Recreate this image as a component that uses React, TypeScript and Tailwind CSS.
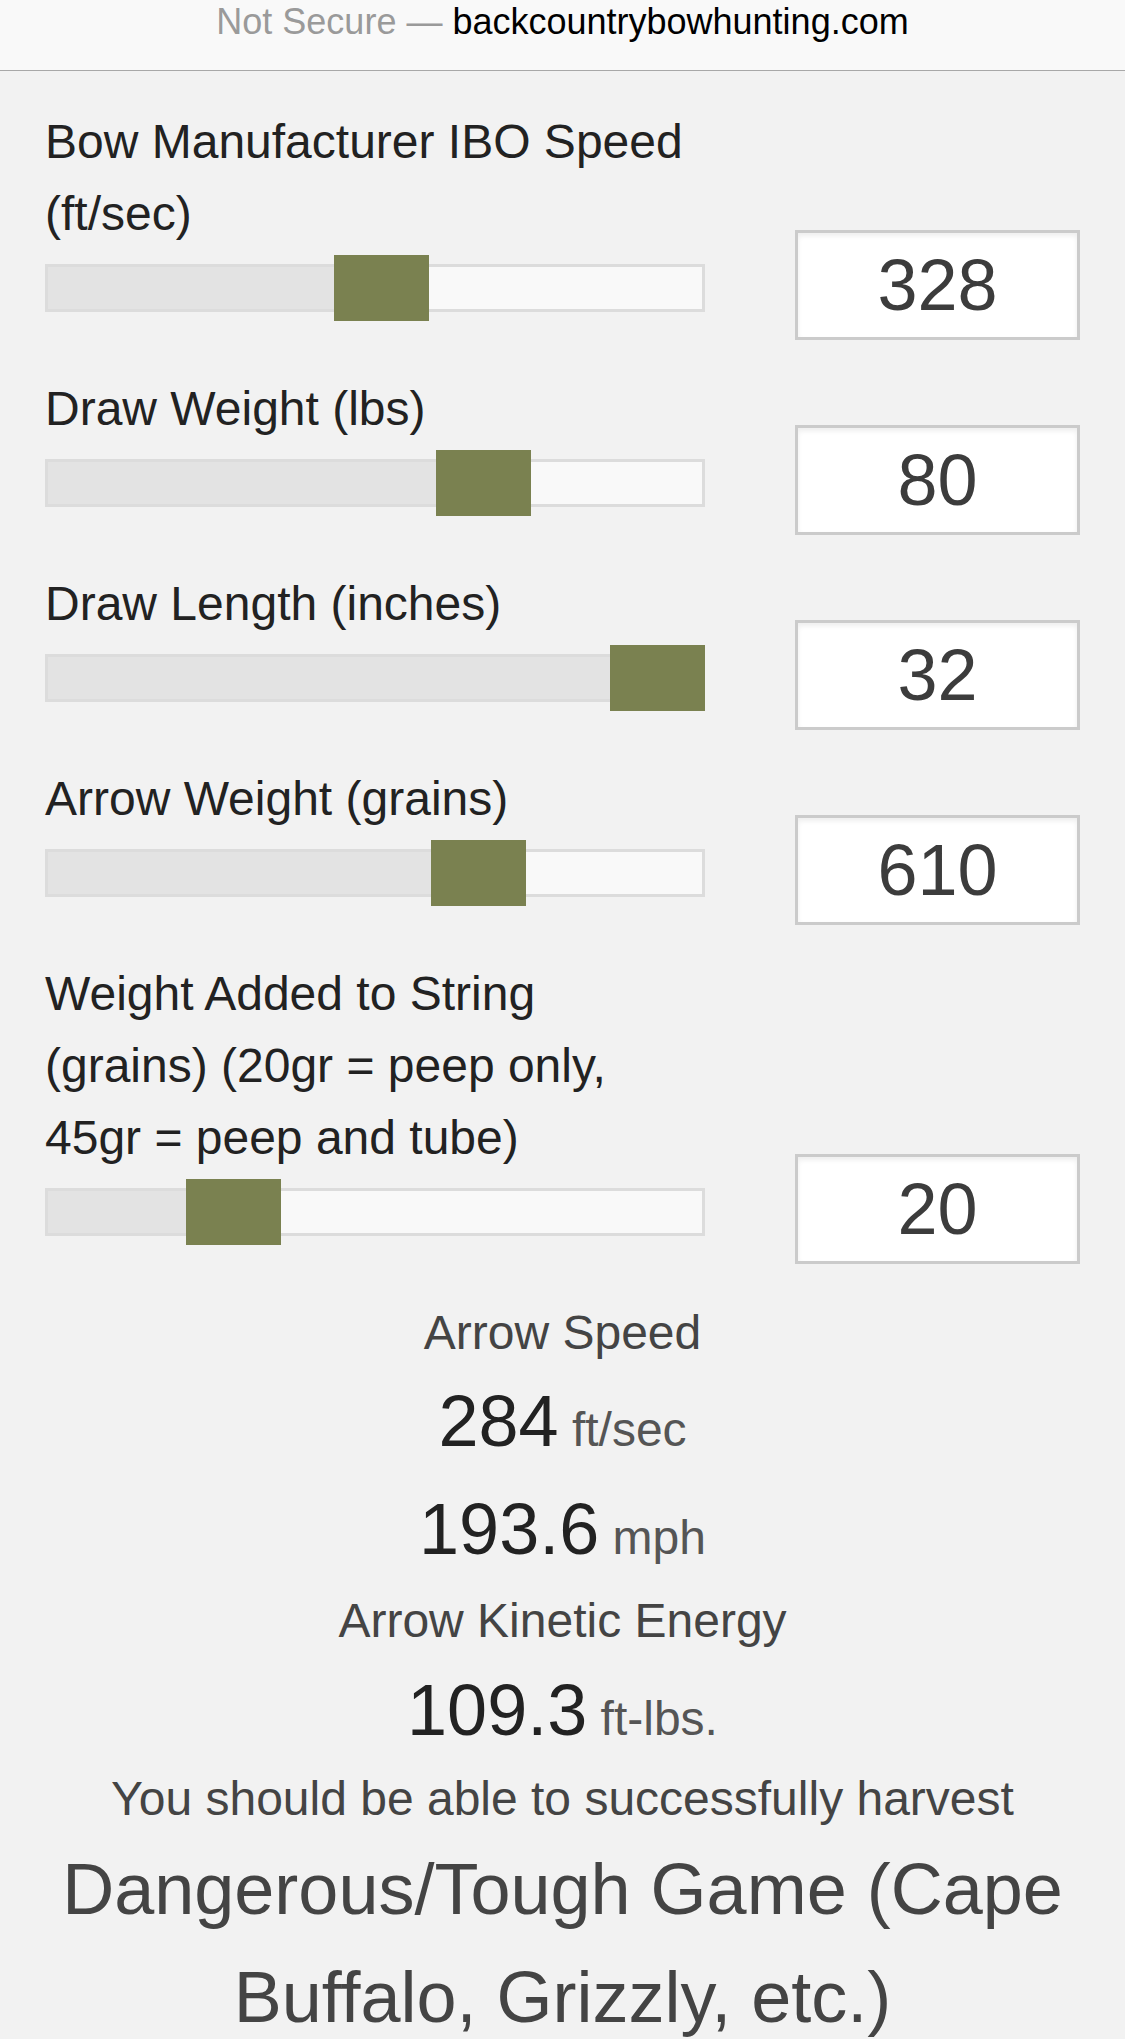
import React from "react";

type Field = {
  label: string;
  value: string;
  offset: number; // thumb offset from the track's left edge, px
};

const fields: Field[] = [
  { label: "Bow Manufacturer IBO Speed (ft/sec)", value: "328", offset: 289 },
  { label: "Draw Weight (lbs)", value: "80", offset: 391 },
  { label: "Draw Length (inches)", value: "32", offset: 565 },
  { label: "Arrow Weight (grains)", value: "610", offset: 386 },
  {
    label: "Weight Added to String (grains) (20gr = peep only, 45gr = peep and tube)",
    value: "20",
    offset: 141,
  },
];

const Slider = ({ offset }: { offset: number }) => {
  return (
    <div className="relative mt-[5px] h-[66px] w-[660px]">
      <div className="absolute left-0 right-0 top-[9px] h-[48px] border-[3px] border-[#dcdcdc] bg-[#f9f9f9]">
        <div className="h-full bg-[#e3e3e3]" style={{ width: offset + 45 }} />
      </div>
      <div
        className="absolute top-0 h-[66px] w-[95px] bg-[#7a8150]"
        style={{ left: offset }}
      />
    </div>
  );
};

const FieldRow = ({ field }: { field: Field }) => {
  return (
    <div className="flex items-end justify-between">
      <div className="flex w-[660px] flex-col pb-[19px]">
        <div className="max-w-[648px] text-[48px] leading-[72px] text-[#222]">
          {field.label}
        </div>
        <Slider offset={field.offset} />
      </div>
      <div className="flex h-[110px] w-[285px] items-center justify-center border-[3px] border-[#cbcbcb] bg-white text-[72px] leading-none text-[#3c3c3c] shadow-[inset_0_3px_5px_rgba(0,0,0,0.07)]">
        {field.value}
      </div>
    </div>
  );
};

const Reading = ({ num, unit, lh }: { num: string; unit: string; lh: string }) => {
  return (
    <div className={`text-[72px] text-[#222] ${lh}`}>
      {num}
      <span className="text-[48px] leading-none text-[#555]"> {unit}</span>
    </div>
  );
};

export default function App() {
  return (
    <div
      className="min-h-[2039px] w-[1125px] bg-[#f2f2f2]"
      style={{ fontFamily: '"Liberation Sans", Arial, sans-serif' }}
    >
      <div className="h-[71px] border-b border-[#a8a8a8] bg-[#f9f9f9] pt-[2px] text-center text-[36px] leading-[40px]">
        <span className="text-[#9a9a9a]">Not Secure — </span>
        <span className="text-black">backcountrybowhunting.com</span>
      </div>

      <div className="flex flex-col gap-[33px] px-[45px] pt-[35px]">
        {fields.map((f) => (
          <FieldRow key={f.label} field={f} />
        ))}

        <div className="flex flex-col items-center text-center">
          <div className="text-[48px] leading-[72px] text-[#444]">Arrow Speed</div>
          <Reading num="284" unit="ft/sec" lh="leading-[104px]" />
          <Reading num="193.6" unit="mph" lh="leading-[112px]" />
          <div className="text-[48px] leading-[72px] text-[#444]">Arrow Kinetic Energy</div>
          <Reading num="109.3" unit="ft-lbs." lh="leading-[106px]" />
          <div className="text-[48px] leading-[72px] text-[#444]">
            You should be able to successfully harvest
          </div>
          <div className="text-[72px] leading-[108px] text-[#444]">
            Dangerous/Tough Game (Cape Buffalo, Grizzly, etc.)
          </div>
        </div>
      </div>
    </div>
  );
}
